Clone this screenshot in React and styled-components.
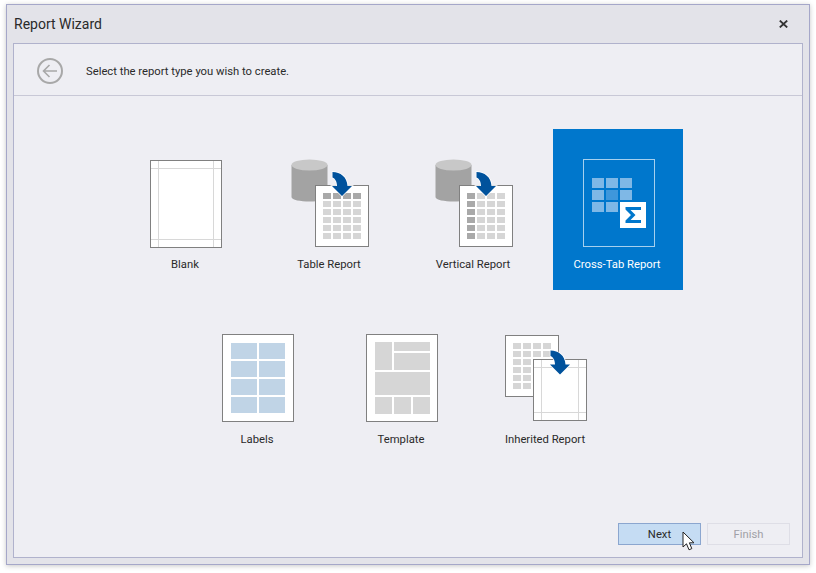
import styled, { createGlobalStyle } from 'styled-components';

const GlobalStyle = createGlobalStyle`
  html, body {
    margin: 0;
    background: #ffffff;
  }
`;

const TableGrid = ({ dark, x = 41, y = 37 }) => {
  const cells = [];
  for (let r = 0; r < 6; r++) {
    for (let c = 0; c < 4; c++) {
      cells.push(
        <rect key={`${r}-${c}`} x={x + c * 10} y={y + r * 8} width="8" height="6" fill={dark(r, c) ? '#a9a9a9' : '#d6d6d6'} />
      );
    }
  }
  return <g>{cells}</g>;
};

const Cylinder = () => (
  <g>
    <path d="M9.5 9 V41 C9.5 47 45.5 47 45.5 41 V9 Z" fill="#a3a3a3" />
    <ellipse cx="27.5" cy="9" rx="18" ry="5.5" fill="#c8c8c8" />
  </g>
);

const Arrow = ({ dx = 0, dy = 0 }) => (
  <path
    transform={`translate(${dx} ${dy})`}
    d="M50.5 16 C58.5 16 65 21 65.5 30 H70 L60 40 L50 30 H55 C55 25.5 53 22.5 50.5 21.5 Z"
    fill="#00529c"
    stroke="#ffffff"
    strokeWidth="1.5"
    paintOrder="stroke"
  />
);

const Sheet = () => <rect x="33.5" y="29.5" width="53" height="61" fill="#ffffff" stroke="#808080" />;

const BlankIcon = () => (
  <Icon viewBox="0 0 96 96">
    <rect x="12.5" y="4.5" width="71" height="87" fill="#ffffff" stroke="#808080" />
    <path d="M20.5 5 V91 M75.5 5 V91 M13 12.5 H83 M13 83.5 H83" stroke="#d8d8d8" fill="none" />
  </Icon>
);

const TableIcon = () => (
  <Icon viewBox="0 0 96 96">
    <Cylinder />
    <Sheet />
    <TableGrid dark={(r) => r === 0} />
    <Arrow />
  </Icon>
);

const VerticalIcon = () => (
  <Icon viewBox="0 0 96 96">
    <Cylinder />
    <Sheet />
    <TableGrid dark={(r, c) => c === 0} />
    <Arrow />
  </Icon>
);

const crossCells = [0, 1, 2].flatMap((r) => [0, 1, 2].map((c) => ({ r, c })));

const CrossTabIcon = () => (
  <Icon viewBox="0 0 96 96">
    <rect x="13.5" y="3.5" width="71" height="87" fill="none" stroke="#a6d0ee" />
    {crossCells.map(({ r, c }) => (
      <rect key={`${r}-${c}`} x={22 + c * 14} y={22 + r * 12} width="12" height="10" fill={r === 1 && c === 1 ? '#3f97db' : '#7fb8e6'} />
    ))}
    <rect x="50" y="46" width="26" height="26" fill="#ffffff" />
    <path d="M55.5 51 H71 V54 H60.5 L65.5 59 L60.5 64 H71 V67 H55.5 V64.5 L61 59 L55.5 53.5 Z" fill="#0077cc" />
  </Icon>
);

const labelCells = [12, 30, 48, 66].flatMap((y) => [21, 49].map((x) => ({ x, y })));

const LabelsIcon = () => (
  <Icon viewBox="0 0 96 96">
    <rect x="12.5" y="3.5" width="71" height="87" fill="#ffffff" stroke="#808080" />
    {labelCells.map(({ x, y }) => (
      <rect key={`${x}-${y}`} x={x} y={y} width="26" height="16" fill="#c0d4e6" />
    ))}
  </Icon>
);

const TemplateIcon = () => (
  <Icon viewBox="0 0 96 96">
    <rect x="12.5" y="3.5" width="71" height="87" fill="#ffffff" stroke="#808080" />
    <g fill="#d6d6d6">
      <rect x="21" y="11" width="17" height="28" />
      <rect x="40" y="11" width="36" height="9" />
      <rect x="40" y="22" width="36" height="17" />
      <rect x="21" y="41" width="55" height="23" />
      <rect x="21" y="66" width="17" height="17" />
      <rect x="40" y="66" width="17" height="17" />
      <rect x="59" y="66" width="17" height="17" />
    </g>
  </Icon>
);

const InheritedIcon = () => (
  <Icon viewBox="0 0 96 96">
    <rect x="7.5" y="4.5" width="53" height="61" fill="#ffffff" stroke="#808080" />
    <TableGrid x={15} y={12} dark={() => false} />
    <rect x="35.5" y="28.5" width="53" height="61" fill="#ffffff" stroke="#808080" />
    <path d="M43.5 29 V89 M80.5 29 V89 M36 36.5 H88 M36 81.5 H88" stroke="#d8d8d8" fill="none" />
    <Arrow dx={2} dy={3.5} />
  </Icon>
);

const rows = [
  [
    { name: 'Blank', Art: BlankIcon },
    { name: 'Table Report', Art: TableIcon },
    { name: 'Vertical Report', Art: VerticalIcon },
    { name: 'Cross-Tab Report', Art: CrossTabIcon, selected: true },
  ],
  [
    { name: 'Labels', Art: LabelsIcon },
    { name: 'Template', Art: TemplateIcon },
    { name: 'Inherited Report', Art: InheritedIcon },
  ],
];

const App = () => (
  <Page>
    <GlobalStyle />
    <Window>
      <TitleBar>
        <Title>Report Wizard</Title>
        <CloseButton aria-label="Close">
          <svg width="9" height="8" viewBox="0 0 9 8">
            <path d="M0.8 0.6 L8.2 7.4 M8.2 0.6 L0.8 7.4" stroke="#333333" strokeWidth="1.9" fill="none" />
          </svg>
        </CloseButton>
      </TitleBar>
      <Panel>
        <Header>
          <BackButton aria-label="Back">
            <svg width="26" height="26" viewBox="0 0 26 26">
              <circle cx="13" cy="13" r="12" fill="none" stroke="#a8a8a8" strokeWidth="2" />
              <path d="M20 13 H7 M12.5 7 L6.5 13 L12.5 19" fill="none" stroke="#a8a8a8" strokeWidth="1.6" />
            </svg>
          </BackButton>
          <Prompt>Select the report type you wish to create.</Prompt>
        </Header>
        <Gallery>
          {rows.map((row, i) => (
            <TileRow key={i} $indent={i === 1}>
              {row.map(({ name, Art, selected }) => (
                <Tile key={name} $selected={selected}>
                  <Art />
                  <TileLabel>{name}</TileLabel>
                </Tile>
              ))}
            </TileRow>
          ))}
        </Gallery>
        <Footer>
          <WizardButton $hover>Next</WizardButton>
          <WizardButton disabled>Finish</WizardButton>
          <Cursor width="15" height="21" viewBox="0 0 15 21">
            <path d="M1 1 V16 L4.5 12.8 L7 18.8 L9.8 17.6 L7.4 11.8 H12 Z" fill="#ffffff" stroke="#222222" strokeWidth="1" />
          </Cursor>
        </Footer>
      </Panel>
    </Window>
  </Page>
);

export default App;

const Page = styled.div`
  width: 816px;
  height: 573px;
  box-sizing: border-box;
  padding: 4px 6px 8px;
  display: flex;
  font-family: Roboto, 'Noto Sans', sans-serif;
`;

const Window = styled.div`
  flex: 1;
  display: flex;
  flex-direction: column;
  background: #e3e3e9;
  border: 1px solid #a5a7c9;
  box-shadow: 0 1px 5px rgba(0, 0, 0, 0.22);
  padding: 0 6px 6px;
`;

const TitleBar = styled.div`
  height: 38px;
  display: flex;
  align-items: center;
  justify-content: space-between;
`;

const Title = styled.div`
  font-size: 14px;
  color: #2a2a2a;
  padding: 0 0 1px 1px;
`;

const CloseButton = styled.button`
  width: 25px;
  height: 24px;
  margin: 0 7px 1px 0;
  padding: 0;
  border: 0;
  background: none;
  display: flex;
  align-items: center;
  justify-content: center;
`;

const Panel = styled.div`
  flex: 1;
  position: relative;
  display: flex;
  flex-direction: column;
  background: #eeeef3;
  border: 1px solid #b0b2cc;
`;

const Header = styled.div`
  height: 48px;
  display: flex;
  align-items: center;
  gap: 23px;
  padding: 3px 0 0 23px;
  border-bottom: 1px solid #c8c8d6;
`;

const BackButton = styled.button`
  width: 26px;
  height: 26px;
  padding: 0;
  border: 0;
  background: none;
  display: flex;
  margin-bottom: 1px;
`;

const Prompt = styled.div`
  font-size: 11.25px;
  color: #2a2a2a;
  padding-top: 1px;
`;

const Gallery = styled.div`
  flex: 1;
  display: flex;
  flex-direction: column;
  gap: 14px;
  padding: 33px 0 0 107px;
`;

const TileRow = styled.div`
  display: flex;
  gap: 14px;
  padding-left: ${(p) => (p.$indent ? '72px' : '0')};
`;

const Tile = styled.div`
  width: 130px;
  height: 161px;
  box-sizing: border-box;
  padding-top: 27px;
  display: flex;
  flex-direction: column;
  align-items: center;
  background: ${(p) => (p.$selected ? '#0077cc' : 'transparent')};
  color: ${(p) => (p.$selected ? '#ffffff' : '#2a2a2a')};
`;

const Icon = styled.svg`
  width: 96px;
  height: 96px;
  flex: none;
  display: block;
`;

const TileLabel = styled.div`
  margin: 5px 2px 0 0;
  font-size: 11.25px;
  line-height: 16px;
`;

const Footer = styled.div`
  position: relative;
  display: flex;
  justify-content: flex-end;
  gap: 6px;
  padding: 0 12px 12px;
`;

const WizardButton = styled.button`
  width: 83px;
  height: 22px;
  padding: 1px 0 0;
  font: inherit;
  font-size: 11.25px;
  background: ${(p) => (p.$hover ? '#c5dcf3' : 'transparent')};
  border: 1px solid ${(p) => (p.$hover ? '#8ba6cf' : '#dedee6')};
  color: ${(p) => (p.disabled ? '#a0a0a6' : '#2a2a2a')};
`;

const Cursor = styled.svg`
  position: absolute;
  left: 668px;
  bottom: 5px;
`;
